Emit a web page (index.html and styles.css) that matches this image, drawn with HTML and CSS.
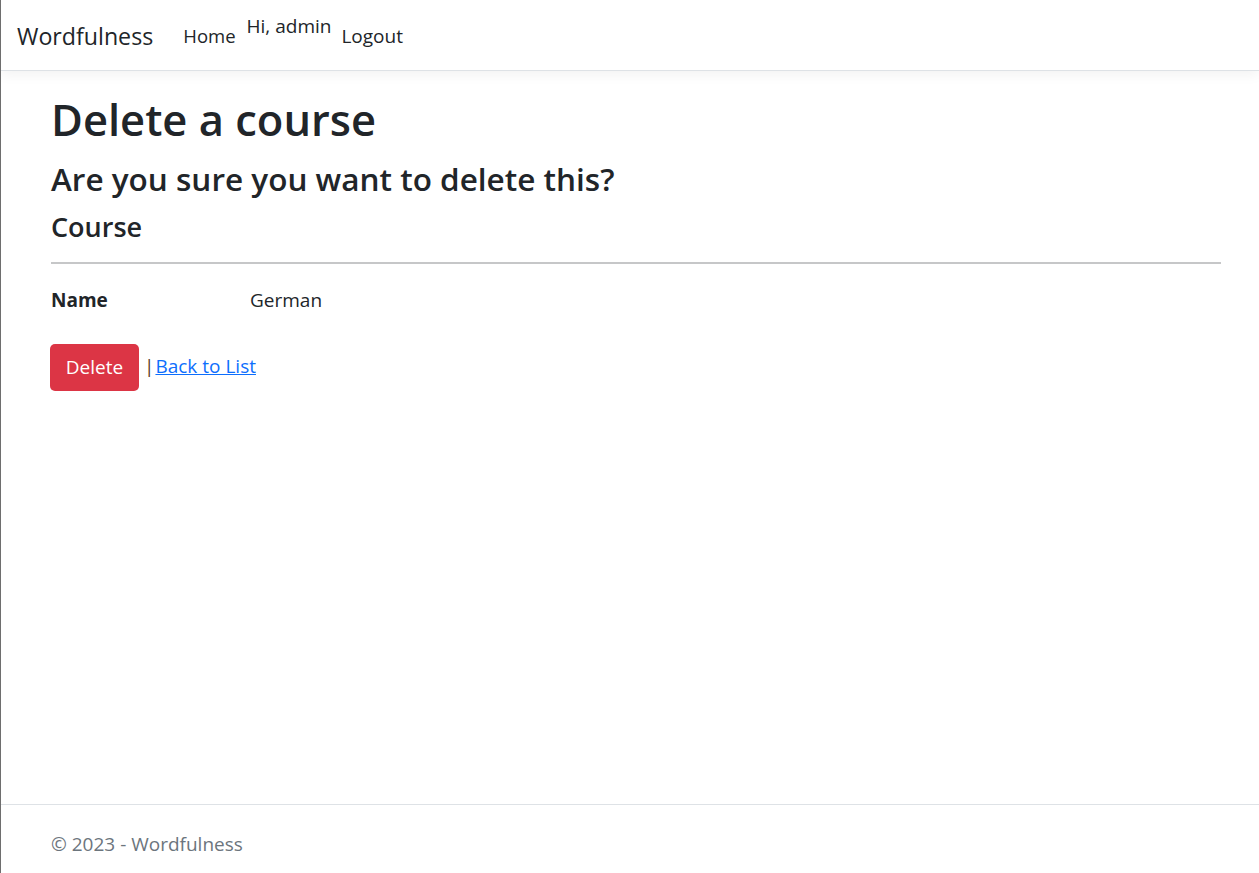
FILE: index.html
```html
<!DOCTYPE html>
<html lang="en">
<head>
<meta charset="utf-8">
<title>Delete - Wordfulness</title>
<link rel="stylesheet" href="styles.css">
</head>
<body>
<div class="page">
  <header class="navbar">
    <a class="brand" href="#">Wordfulness</a>
    <ul class="nav-main">
      <li><a class="nav-link" href="#">Home</a></li>
    </ul>
    <ul class="nav-login">
      <li class="hello">Hi, admin</li>
      <li><a class="nav-link" href="#">Logout</a></li>
    </ul>
  </header>
  <main class="container">
    <h1 class="h1">Delete a course</h1>
    <h3 class="h3">Are you sure you want to delete this?</h3>
    <div>
      <h4 class="h4">Course</h4>
      <hr class="rule">
      <dl class="details">
        <dt>Name</dt>
        <dd>German</dd>
      </dl>
      <form class="actions">
        <button type="button" class="btn-danger">Delete</button>
        <span class="sep">|</span>
        <a class="back" href="#">Back to List</a>
      </form>
    </div>
  </main>
  <footer class="footer">
    <div class="footer-inner">&copy; 2023 - Wordfulness</div>
  </footer>
</div>
</body>
</html>
```

FILE: styles.css
```css
* { box-sizing: border-box; }
html, body { margin: 0; padding: 0; }
body {
  font-family: "Open Sans", "Noto Sans", sans-serif;
  font-size: 19px;
  color: #212529;
  background: #fff;
  border-left: 1px solid #6e6e6e;
}
.page {
  display: flex;
  flex-direction: column;
  height: 873px;
}
.navbar {
  height: 71px;
  flex: none;
  display: flex;
  align-items: flex-start;
  border-bottom: 1px solid #dee2e6;
  box-shadow: 0 4px 12px rgba(0,0,0,.05);
  padding-left: 16px;
}
.brand {
  font-size: 23.2px;
  line-height: 30px;
  color: #212529;
  text-decoration: none;
  margin-top: 21px;
  margin-right: 30px;
}
.nav-main, .nav-login {
  list-style: none;
  margin: 0;
  padding: 0;
  display: flex;
  align-items: flex-start;
}
.nav-link {
  display: block;
  color: #212529;
  text-decoration: none;
  font-size: 19px;
  line-height: 28px;
}
.nav-main { margin-top: 22px; margin-right: 11px; }
.nav-main .nav-link { font-size: 18.5px; }
.hello { font-size: 19px; line-height: 28px; margin-top: 12px; margin-right: 10px; }
.nav-login .nav-link { margin-top: 22px; }
.container {
  flex: 1;
  padding: 0 38px 0 50px;
}
.h1 {
  font-size: 43.5px;
  font-weight: 600;
  line-height: 1.2;
  margin: 23px 0 0;
}
.h3 { font-size: 31.5px; font-weight: 600; margin: 14px 0 0; line-height: 1.2; }
.h4 { font-size: 27px; font-weight: 600; margin: 13px 0 0; line-height: 1.2; }
.rule {
  border: 0;
  border-top: 2px solid #c6c7c8;
  margin: 19px 0 0;
}
.details {
  display: grid;
  grid-template-columns: 199px 1fr;
  margin: 22px 0 0;
  line-height: 28.5px;
}
.details dt { font-weight: 700; }
.details dd { margin: 0; }
.actions {
  display: flex;
  align-items: center;
  margin-top: 29px;
  margin-left: -1px;
}
.btn-danger {
  font-family: inherit;
  font-size: 19px;
  background: #dc3545;
  color: #fff;
  border: 0;
  border-radius: 5px;
  width: 89px;
  height: 47px;
  padding: 0;
  margin-right: 5px;
}
.sep { margin-right: 1px; margin-top: -2px; color: #5a3a1a; }
.back { color: #0d6efd; margin-top: -3px; }
.footer {
  flex: none;
  border-top: 1px solid #dee2e6;
  height: 69px;
  padding: 25px 0 0 50px;
}
.footer-inner {
  color: #6c757d;
  line-height: 28px;
}
```
